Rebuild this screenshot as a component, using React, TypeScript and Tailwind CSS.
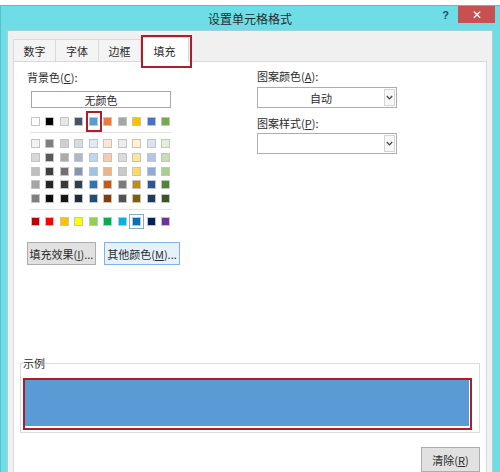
import React from "react";

const theme = ["#ffffff", "#000000", "#e7e6e6", "#44546a", "#5b9bd5", "#ed7d31", "#a5a5a5", "#ffc000", "#4472c4", "#70ad47"];
const tints = [
  ["#f2f2f2", "#7f7f7f", "#d0cece", "#d6dce4", "#deebf6", "#fbe5d5", "#ededed", "#fff2cc", "#dae3f3", "#e2efd9"],
  ["#d8d8d8", "#595959", "#aeabab", "#adb9ca", "#bdd7ee", "#f7cbac", "#dbdbdb", "#fee599", "#b4c6e7", "#c5e0b3"],
  ["#bfbfbf", "#3f3f3f", "#757070", "#8496b0", "#9dc3e6", "#f4b183", "#c9c9c9", "#ffd965", "#8eaadb", "#a8d08d"],
  ["#a5a5a5", "#262626", "#3a3838", "#323f4f", "#2e75b5", "#c55a11", "#7b7b7b", "#bf9000", "#2f5496", "#538135"],
  ["#7f7f7f", "#0c0c0c", "#171616", "#222a35", "#1e4e79", "#833c0b", "#525252", "#7f6000", "#1f3864", "#375623"],
];
const standard = ["#c00000", "#ff0000", "#ffc000", "#ffff00", "#92d050", "#00b050", "#00b0f0", "#0070c0", "#002060", "#7030a0"];

function Swatch({ color, mark }: { color: string; mark?: "red" | "sel" }) {
  return (
    <div className="relative w-[9px] h-[9px] border border-[#c4c4c4]" style={{ backgroundColor: color }}>
      {mark === "red" && (
        <div className="absolute left-[-4px] top-[-7px] w-[16px] h-[21px] border-2 border-[#a81f2e]" />
      )}
      {mark === "sel" && (
        <div className="absolute left-[-4px] top-[-4px] w-[15px] h-[15px] border border-[#8fa9c2]" />
      )}
    </div>
  );
}

function Dropdown({ text }: { text?: string }) {
  return (
    <div className="flex w-[140px] h-[21px] border border-[#abadb3] bg-white">
      <div className="flex-1 flex items-center justify-center leading-[14px]">{text}</div>
      <div className="w-[11px] my-[1px] mr-[1px] border border-[#d5d5d5] bg-[#f7f7f7] flex items-center justify-center">
        <svg width="7" height="5" viewBox="0 0 7 5">
          <polyline points="0.8,1 3.5,3.8 6.2,1" fill="none" stroke="#404040" strokeWidth="1.2" />
        </svg>
      </div>
    </div>
  );
}

export default function App() {
  return (
    <div className="w-[500px] h-[472px] overflow-hidden bg-white font-['Noto_Sans_CJK_SC','Noto_Sans',sans-serif] text-[11px] text-[#2b2b2b]">
      <div className="mt-[5px] h-[500px] flex flex-col bg-[#6edde6] border-l border-t border-[#55c2cb] pl-[6px] pr-[7px]">
        {/* title bar */}
        <div className="h-[24px] grid grid-cols-[1fr_auto_1fr]">
          <div />
          <div className="flex items-center pt-[1px] text-[12px] leading-[16px] text-[#2a2a2a]">设置单元格格式</div>
          <div className="flex justify-end items-start">
            <div className="mt-[2px] mr-[9px] text-[11px] leading-[14px] font-bold text-[#244a6c] font-['Liberation_Sans',sans-serif]">?</div>
            <div className="w-[37px] h-[17px] mr-[-2px] bg-[#c75050] flex items-center justify-center text-white text-[12px] leading-[12px] font-['Liberation_Sans',sans-serif]">
              ✕
            </div>
          </div>
        </div>

        {/* client area */}
        <div className="flex-1 flex flex-col bg-[#f0f0f0] border-l border-r border-t border-[#a8cfd3] px-[5px] pt-[6px]">
          {/* tabs */}
          <div className="flex items-end h-[24px]">
            <div className="w-[43px] h-[22px] border border-b-0 border-[#d9d9d9] bg-[#f4f4f4] flex items-center justify-center leading-[14px]">数字</div>
            <div className="w-[44px] h-[22px] ml-[-1px] border border-b-0 border-[#d9d9d9] bg-[#f4f4f4] flex items-center justify-center leading-[14px]">字体</div>
            <div className="w-[43px] h-[22px] ml-[-1px] border border-b-0 border-[#d9d9d9] bg-[#f4f4f4] flex items-center justify-center leading-[14px]">边框</div>
            <div className="relative z-10 w-[49px] h-[25px] mb-[-1px] ml-[-1px] border border-b-0 border-[#d9d9d9] bg-white flex items-center justify-center pt-[1px] leading-[14px]">
              填充
              <div className="absolute left-[0px] top-[-3px] w-[51px] h-[33px] border-2 border-[#a81f2e]" />
            </div>
          </div>

          {/* panel */}
          <div className="flex-1 flex flex-col bg-white border border-[#d9d9d9]">
            <div className="flex pt-[7px] pl-[13px]">
              {/* left column */}
              <div className="w-[230px] flex flex-col">
                <div className="leading-[16px]">
                  背景色(<u>C</u>):
                </div>
                <div className="mt-[6px] ml-[4px] w-[140px] h-[17px] border border-[#a8a8a8] bg-white flex items-center justify-center leading-[14px]">
                  无颜色
                </div>
                <div className="mt-[9px] ml-[4px] grid grid-cols-[repeat(10,9px)] gap-x-[5.45px]">
                  {theme.map((c, i) => (
                    <Swatch key={i} color={c} mark={i === 4 ? "red" : undefined} />
                  ))}
                </div>
                <div className="mt-[6px] ml-[3px] w-[142px] h-px bg-[#e2e2e2]" />
                <div className="mt-[6px] ml-[4px] grid grid-cols-[repeat(10,9px)] gap-x-[5.45px] gap-y-[4.75px]">
                  {tints.flat().map((c, i) => (
                    <Swatch key={i} color={c} />
                  ))}
                </div>
                <div className="mt-[6px] ml-[3px] w-[142px] h-px bg-[#e2e2e2]" />
                <div className="mt-[7px] ml-[4px] grid grid-cols-[repeat(10,9px)] gap-x-[5.45px]">
                  {standard.map((c, i) => (
                    <Swatch key={i} color={c} mark={i === 7 ? "sel" : undefined} />
                  ))}
                </div>
                <div className="mt-[16px] flex gap-[8px]">
                  <div className="w-[69px] h-[23px] border border-[#adadad] bg-[#e1e1e1] flex items-center justify-center leading-[14px]">
                    填充效果(<u>I</u>)...
                  </div>
                  <div className="w-[76px] h-[23px] border border-[#7eb4ea] bg-[#e5f1fb] flex items-center justify-center leading-[14px]">
                    其他颜色(<u>M</u>)...
                  </div>
                </div>
              </div>

              {/* right column */}
              <div className="flex flex-col w-[140px]">
                <div className="leading-[16px] mt-[-1px]">
                  图案颜色(<u>A</u>):
                </div>
                <div className="mt-[3px]">
                  <Dropdown text="自动" />
                </div>
                <div className="mt-[7px] leading-[16px]">
                  图案样式(<u>P</u>):
                </div>
                <div className="mt-[2px]">
                  <Dropdown />
                </div>
              </div>
            </div>

            {/* sample */}
            <fieldset className="mt-[92px] mx-[6px] border border-[#dcdcdc] px-[2px] pt-[9px] pb-[2px]">
              <legend className="text-[11px] leading-[12px]">示例</legend>
              <div className="mr-[5px] border-2 border-[#a81f2e] pr-px pb-[2px] bg-white">
                <div className="h-[46px] bg-[#5b9bd5]" />
              </div>
            </fieldset>

            <div className="mt-[14px] mr-[6px] self-end w-[59px] h-[25px] border border-[#adadad] bg-[#e1e1e1] flex items-center justify-center leading-[14px]">
              清除(<u>R</u>)
            </div>
          </div>
        </div>
      </div>
    </div>
  );
}
